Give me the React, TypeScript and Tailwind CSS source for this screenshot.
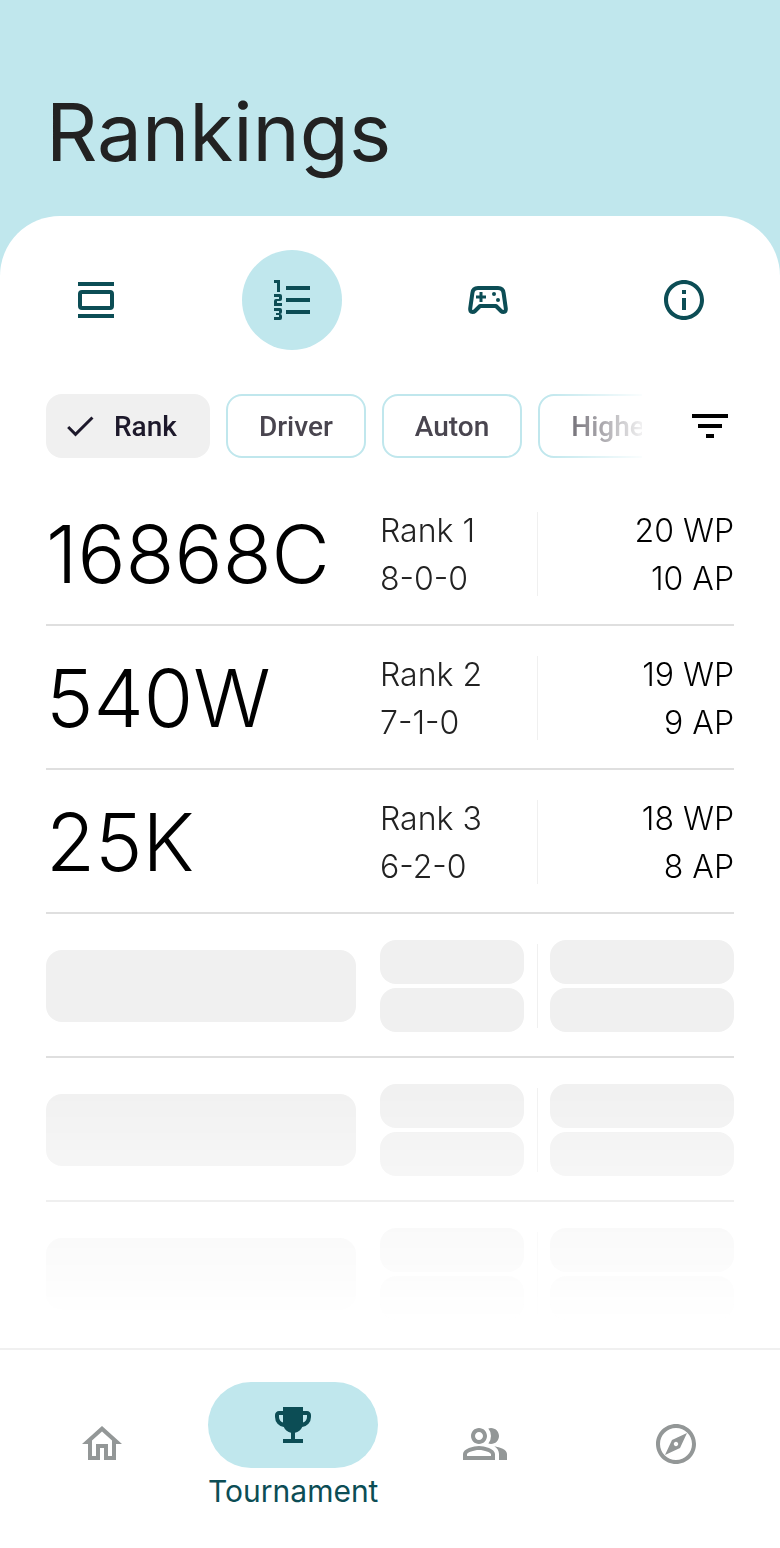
import type { ReactNode } from "react";
import {
  MdCheck,
  MdFilterList,
  MdInfoOutline,
  MdOutlineExplore,
  MdOutlineHome,
  MdOutlinePeopleAlt,
  MdOutlineSportsEsports,
} from "react-icons/md";

type Team = { number: string; rank: number; record: string; wp: number; ap: number };

const teams: Team[] = [
  { number: "16868C", rank: 1, record: "8-0-0", wp: 20, ap: 10 },
  { number: "540W", rank: 2, record: "7-1-0", wp: 19, ap: 9 },
  { number: "25K", rank: 3, record: "6-2-0", wp: 18, ap: 8 },
];

const placeholderRows = [0, 1, 2];

function ViewDayIcon() {
  return (
    <svg viewBox="0 0 48 48" className="size-12" fill="none" aria-hidden="true">
      <path d="M6 6h36v4H6zM6 38h36v4H6z" fill="currentColor" />
      <rect x="8" y="16" width="32" height="16" rx="2" stroke="currentColor" strokeWidth="4" />
    </svg>
  );
}

function NumberedListIcon() {
  return (
    <svg viewBox="0 0 48 48" className="size-12" fill="currentColor" aria-hidden="true">
      <path d="M18 10h24v4H18zM18 22h24v4H18zM18 34h24v4H18z" />
      <path d="M6 4h6v12H9V7H6z" />
      <path d="M6 18h6q2 0 2 2v3q0 2-2 2H9v2h5v3H6v-5q0-2 2-2h3v-2H6z" />
      <path d="M6 32h6q2 0 2 2v2q0 2-2 2q2 0 2 2v2q0 2-2 2H6v-3h5v-2H8v-2h3v-2H6z" />
    </svg>
  );
}

function GamepadIcon() {
  return (
    <svg viewBox="0 0 48 48" className="size-12" fill="none" aria-hidden="true">
      <path
        d="M14 12h20q5 0 5.600 5l2.200 15.500q.400 3.500-2.300 3.500-1.500 0-2.500-1l-5-5H16l-5 5q-1 1-2.500 1-2.700 0-2.300-3.500L8.400 17Q9 12 14 12z"
        stroke="currentColor"
        strokeWidth="4"
        strokeLinejoin="round"
      />
      <path d="M15.500 16h3v3.500H22v3h-3.500V26h-3v-3.500H12v-3h3.500z" fill="currentColor" />
      <circle cx="30" cy="18" r="2" fill="currentColor" />
      <circle cx="34" cy="24" r="2" fill="currentColor" />
    </svg>
  );
}

function TrophyIcon() {
  return (
    <svg viewBox="0 -960 960 960" className="size-12" fill="currentColor" aria-hidden="true">
      <path d="M280-120v-80h160v-124q-49-11-87.5-41.5T296-442q-75-9-125.5-65.5T120-640v-40q0-33 23.5-56.5T200-760h80v-80h400v80h80q33 0 56.5 23.5T840-680v40q0 76-50.5 132.5T664-442q-18 46-56.5 76.5T520-324v124h160v80H280Zm0-408v-152h-80v40q0 38 22 68.5t58 43.5Zm400 0q36-13 58-43.5t22-68.5v-40h-80v152Z" />
    </svg>
  );
}

function Tab({ label, active = false, children }: { label: string; active?: boolean; children: ReactNode }) {
  return (
    <button
      type="button"
      aria-label={label}
      aria-pressed={active}
      className={`flex size-[100px] items-center justify-center rounded-full text-[#0c4d55] ${active ? "bg-[#c0e7ed]" : ""}`}
    >
      {children}
    </button>
  );
}

function Chip({ label, selected = false }: { label: string; selected?: boolean }) {
  return (
    <button
      type="button"
      aria-pressed={selected}
      className={`flex h-16 shrink-0 items-center gap-4 rounded-2xl font-[Roboto,sans-serif] text-[28px] font-medium ${
        selected ? "bg-[#f0f0f0] pl-4 pr-[33px] text-[#1d192b]" : "border-2 border-[#c0e7ed] px-[31px] text-[#49454f]"
      }`}
    >
      {selected && <MdCheck className="size-9" aria-hidden="true" />}
      <span className="pt-0.5">{label}</span>
    </button>
  );
}

function Divider() {
  return <span className="h-[84px] w-px shrink-0 bg-[#f0f0f0]" />;
}

function Placeholders() {
  return (
    <div className="flex flex-1 flex-col gap-1">
      <div className="h-11 rounded-2xl bg-[#f0f0f0]" />
      <div className="h-11 rounded-2xl bg-[#f0f0f0]" />
    </div>
  );
}

function NavLink({ label, children }: { label: string; children: ReactNode }) {
  return (
    <a href="#" aria-label={label} className="flex justify-center text-[#939797]">
      {children}
    </a>
  );
}

export default function App() {
  return (
    <div className="flex min-h-screen flex-col bg-[#c0e7ed] font-[Inter,sans-serif]">
      <header className="px-[46px] pt-[84px] pb-9">
        <h1 className="text-[80px] leading-24 text-[#222222]">Rankings</h1>
      </header>

      <main className="flex-1 rounded-t-[60px] bg-white px-[46px] pt-[34px]">
        <div className="flex justify-between">
          <Tab label="Matches">
            <ViewDayIcon />
          </Tab>
          <Tab label="Rankings" active>
            <NumberedListIcon />
          </Tab>
          <Tab label="Skills">
            <GamepadIcon />
          </Tab>
          <Tab label="Info">
            <MdInfoOutline className="size-12" />
          </Tab>
        </div>

        <div className="mt-11 flex items-center gap-11">
          <div className="flex min-w-0 flex-1 gap-4 overflow-hidden [mask-image:linear-gradient(to_right,black_calc(100%-96px),transparent_calc(100%+8px))]">
            <Chip label="Rank" selected />
            <Chip label="Driver" />
            <Chip label="Auton" />
            <Chip label="Highest" />
          </div>
          <button type="button" aria-label="Filter" className="text-black">
            <MdFilterList className="size-12" />
          </button>
        </div>

        <table className="mt-6 w-full table-fixed border-separate border-spacing-0 [mask-image:linear-gradient(to_top,transparent_24px,black_270px)]">
          <colgroup>
            <col />
            <col className="w-[158px]" />
            <col className="w-[196px]" />
          </colgroup>
          <tbody className="text-[32px] leading-12 font-light">
            {teams.map((team) => (
              <tr key={team.number}>
                <th scope="row" className="border-b-2 border-[#dfdfdf] pt-[26px] pb-6 text-left text-[80px] leading-[92px] font-[350] text-black">
                  {team.number}
                </th>
                <td className="border-b-2 border-[#dfdfdf] pt-0.5 text-[#222222]">
                  <div className="flex items-center">
                    <div className="flex-1 pt-0.5 whitespace-nowrap">
                      <div>Rank {team.rank}</div>
                      <div>{team.record}</div>
                    </div>
                    <Divider />
                  </div>
                </td>
                <td className="border-b-2 border-[#dfdfdf] pt-1 text-right text-black">
                  <div>{team.wp} WP</div>
                  <div>{team.ap} AP</div>
                </td>
              </tr>
            ))}
            {placeholderRows.map((row) => (
              <tr key={row}>
                <td className="border-b-2 border-[#dfdfdf] pt-0.5 pr-6">
                  <div className="h-[72px] rounded-2xl bg-[#f0f0f0]" />
                </td>
                <td className="border-b-2 border-[#dfdfdf] pt-[26px] pb-6">
                  <div className="flex items-center gap-[13px]">
                    <Placeholders />
                    <Divider />
                  </div>
                </td>
                <td className="border-b-2 border-[#dfdfdf] pt-[26px] pb-6 pl-3">
                  <Placeholders />
                </td>
              </tr>
            ))}
          </tbody>
        </table>
      </main>

      <nav className="grid grid-cols-4 items-center border-t-2 border-[#f0f0f0] bg-white pt-8 pr-2 pb-[42px] pl-[6px]">
        <NavLink label="Home">
          <MdOutlineHome className="size-12" />
        </NavLink>
        <a href="#" aria-current="page" className="flex flex-col items-center gap-2 text-[#0c4d55]">
          <span className="flex h-[86px] w-[170px] items-center justify-center rounded-full bg-[#c0e7ed]">
            <TrophyIcon />
          </span>
          <span className="text-[30px] leading-[30px]">Tournament</span>
        </a>
        <NavLink label="Teams">
          <MdOutlinePeopleAlt className="size-12" />
        </NavLink>
        <NavLink label="Explore">
          <MdOutlineExplore className="size-12" />
        </NavLink>
      </nav>
    </div>
  );
}
